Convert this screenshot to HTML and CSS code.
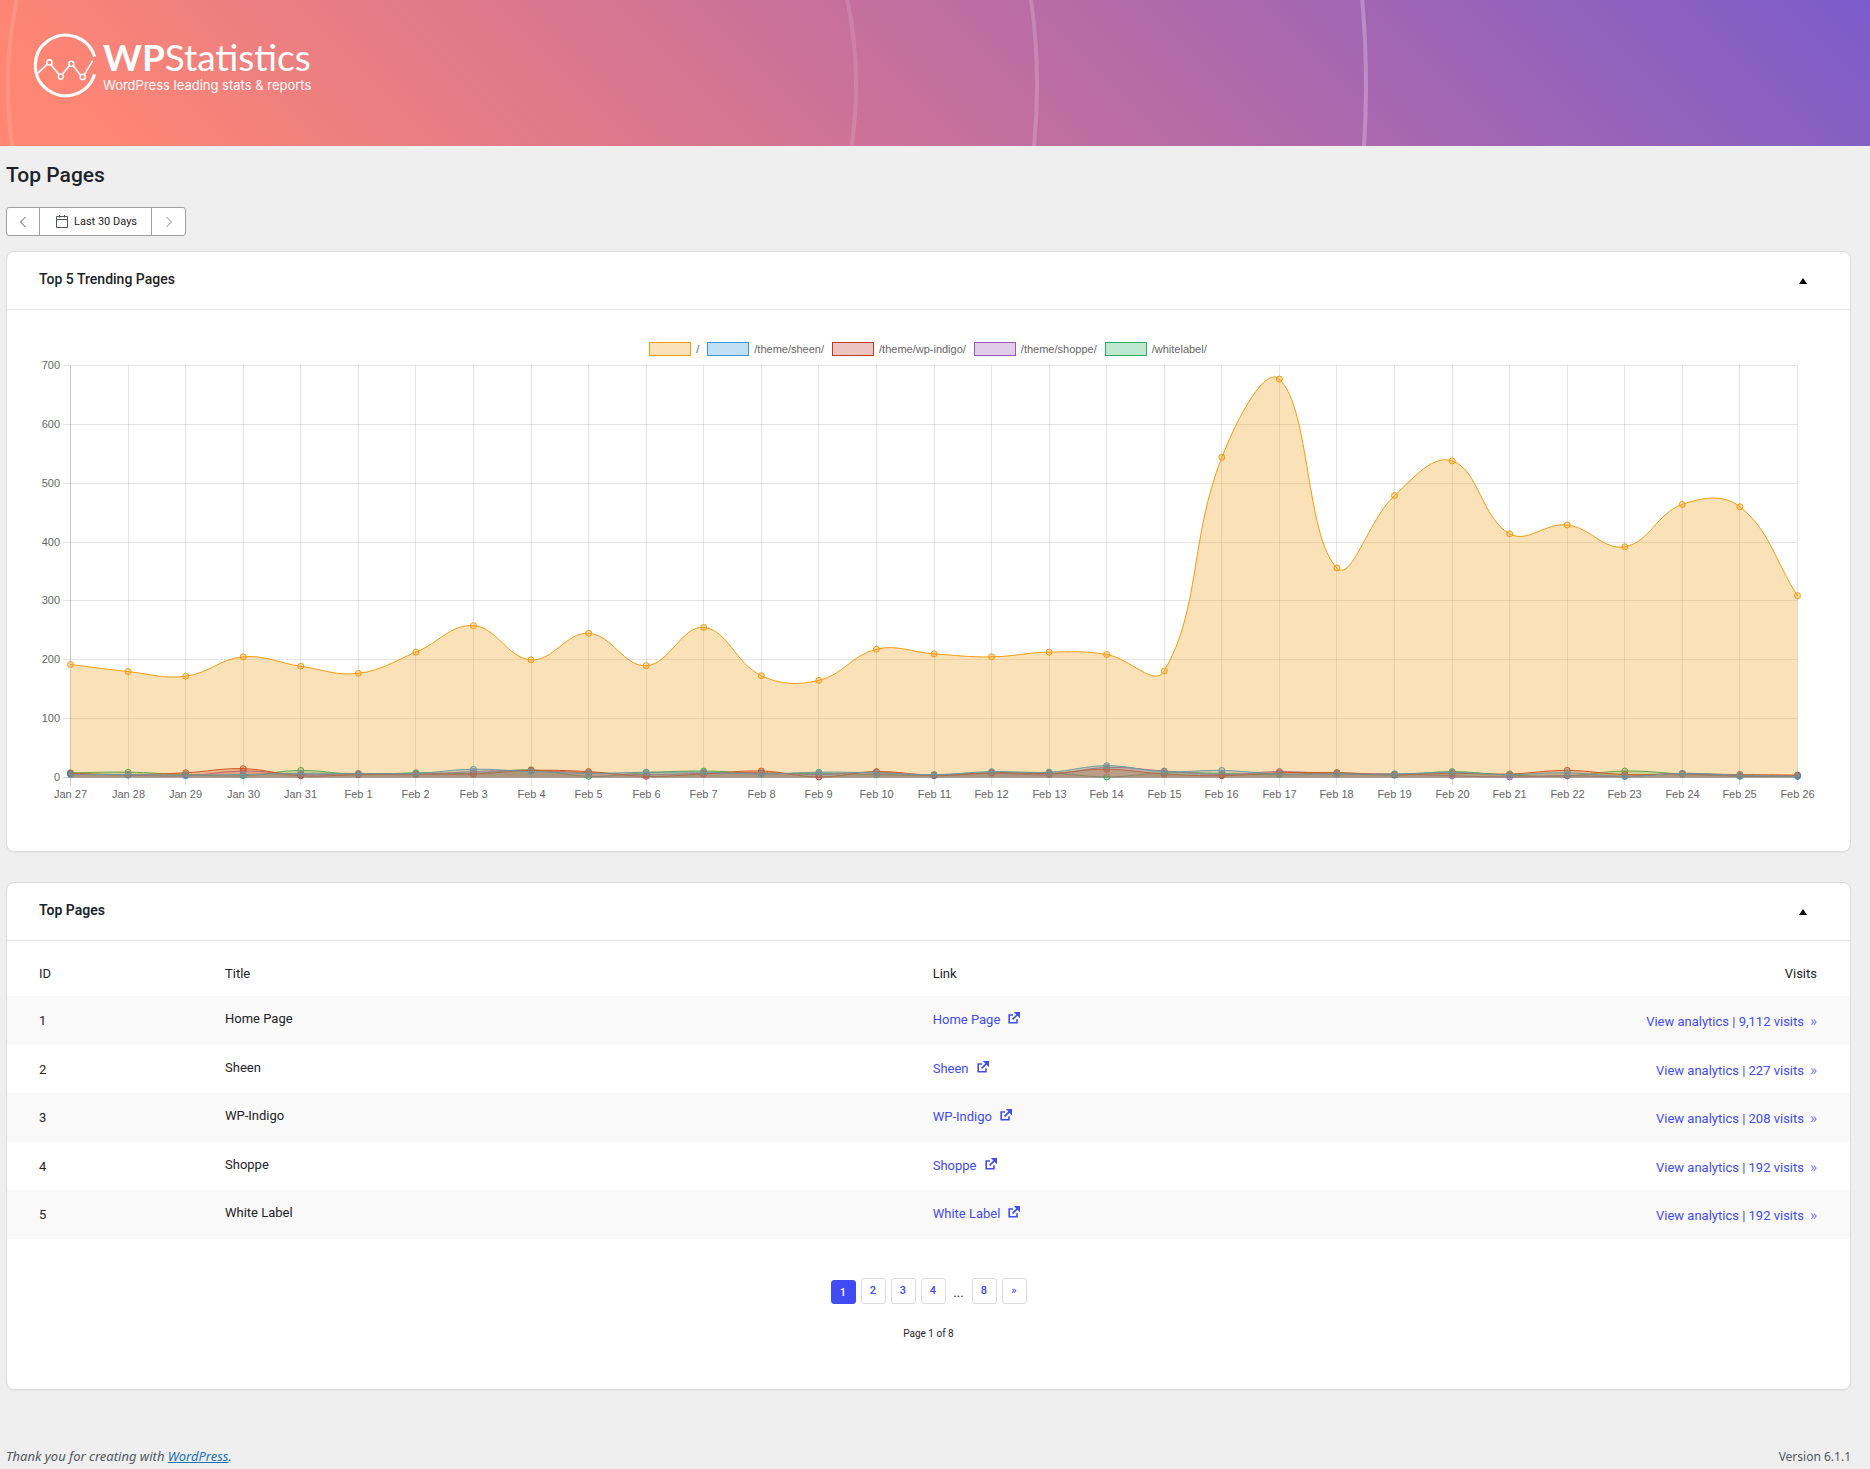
FILE: index.html
```html
<!DOCTYPE html>
<html lang="en">
<head>
<meta charset="utf-8">
<title>Top Pages - WP Statistics</title>
<meta name="viewport" content="width=device-width, initial-scale=1">
<link rel="stylesheet" href="styles.css">
</head>
<body>
<header class="banner">
  <svg class="banner-rings" aria-hidden="true">
    <circle class="ring ring-inner" cx="432" cy="85" r="424"/>
    <circle class="ring ring-middle" cx="432" cy="85" r="605"/>
    <circle class="ring ring-outer" cx="432" cy="85" r="934"/>
  </svg>
  <a class="logo" href="#">
    <svg class="logo-mark" viewBox="0 0 66 66" aria-hidden="true">
      <g fill="none" stroke="#fff">
        <path stroke-width="3" d="M61.6 23.6A30.3 30.3 0 1 0 61.6 41.2"/>
        <path stroke-width="1.6" d="M4.6 40.4L14.9 30.7M18 31.7L26.3 41.8M29.3 41.5L36.5 32.3M40 32.4L47.6 42.3M51 42.2L59.6 27.8"/>
        <circle cx="16.4" cy="29.4" r="2.6" stroke-width="1.5"/>
        <circle cx="27.8" cy="43.5" r="2.6" stroke-width="1.5"/>
        <circle cx="38.3" cy="30.8" r="2.6" stroke-width="1.5"/>
        <circle cx="49.7" cy="43.9" r="2.6" stroke-width="1.5"/>
      </g>
    </svg>
    <span class="logo-words">
      <span class="logo-name"><b>WP</b>Statistics</span>
      <span class="logo-tagline">WordPress leading stats &amp; reports</span>
    </span>
  </a>
</header>

<main class="page">
  <h1 class="page-title">Top Pages</h1>

  <div class="date-range">
    <button type="button" class="date-step" aria-label="Previous period">
      <svg width="8" height="12" viewBox="0 0 8 12" aria-hidden="true"><path d="M6.5 1L1.5 6l5 5"/></svg>
    </button>
    <button type="button" class="date-current">
      <svg width="12" height="13" viewBox="0 0 12 13" aria-hidden="true"><path d="M.5 1.5h11v11H.5zM.5 4.5h11M3.5 0v2.5M8.5 0v2.5"/></svg>
      Last 30 Days
    </button>
    <button type="button" class="date-step date-step-next" aria-label="Next period">
      <svg width="8" height="12" viewBox="0 0 8 12" aria-hidden="true"><path d="M1.5 1l5 5-5 5"/></svg>
    </button>
  </div>

  <section class="card">
    <div class="card-head">
      <h2 class="card-title">Top 5 Trending Pages</h2>
      <button type="button" class="card-toggle" aria-label="Toggle panel: Top 5 Trending Pages">
        <svg width="8" height="6" viewBox="0 0 8 6" aria-hidden="true"><path d="M4 0l4 6H0z"/></svg>
      </button>
    </div>
    <div class="chart">
      <ul class="legend">
        <li class="legend-item"><span class="swatch swatch-home"></span>/</li>
        <li class="legend-item"><span class="swatch swatch-sheen"></span>/theme/sheen/</li>
        <li class="legend-item"><span class="swatch swatch-indigo"></span>/theme/wp-indigo/</li>
        <li class="legend-item"><span class="swatch swatch-shoppe"></span>/theme/shoppe/</li>
        <li class="legend-item"><span class="swatch swatch-label"></span>/whitelabel/</li>
      </ul>
      <svg class="plot" id="plot" role="img" aria-label="Visits per day for the top five pages"></svg>
    </div>
  </section>

  <section class="card">
    <div class="card-head">
      <h2 class="card-title card-title-bold">Top Pages</h2>
      <button type="button" class="card-toggle" aria-label="Toggle panel: Top Pages">
        <svg width="8" height="6" viewBox="0 0 8 6" aria-hidden="true"><path d="M4 0l4 6H0z"/></svg>
      </button>
    </div>
    <svg class="symbols" aria-hidden="true">
      <symbol id="external" viewBox="0 0 12 12">
        <path fill="none" stroke="currentColor" stroke-width="1.6" d="M5 3H1.2v7.8H9V7.2M4.6 7.4L9.4 2.6"/>
        <path fill="currentColor" d="M5.8 0H12v6.2l-2-2L7.8 2z"/>
      </symbol>
    </svg>
    <table class="pages">
      <thead>
        <tr><th class="col-id">ID</th><th class="col-title">Title</th><th class="col-link">Link</th><th class="col-visits">Visits</th></tr>
      </thead>
      <tbody>
        <tr>
          <td class="col-id">1</td><td class="col-title">Home Page</td>
          <td class="col-link"><a class="page-link" href="#">Home Page <svg width="12" height="12"><use href="#external"/></svg></a></td>
          <td class="col-visits"><a href="#">View analytics | 9,112 visits<span class="more">»</span></a></td>
        </tr>
        <tr>
          <td class="col-id">2</td><td class="col-title">Sheen</td>
          <td class="col-link"><a class="page-link" href="#">Sheen <svg width="12" height="12"><use href="#external"/></svg></a></td>
          <td class="col-visits"><a href="#">View analytics | 227 visits<span class="more">»</span></a></td>
        </tr>
        <tr>
          <td class="col-id">3</td><td class="col-title">WP-Indigo</td>
          <td class="col-link"><a class="page-link" href="#">WP-Indigo <svg width="12" height="12"><use href="#external"/></svg></a></td>
          <td class="col-visits"><a href="#">View analytics | 208 visits<span class="more">»</span></a></td>
        </tr>
        <tr>
          <td class="col-id">4</td><td class="col-title">Shoppe</td>
          <td class="col-link"><a class="page-link" href="#">Shoppe <svg width="12" height="12"><use href="#external"/></svg></a></td>
          <td class="col-visits"><a href="#">View analytics | 192 visits<span class="more">»</span></a></td>
        </tr>
        <tr>
          <td class="col-id">5</td><td class="col-title">White Label</td>
          <td class="col-link"><a class="page-link" href="#">White Label <svg width="12" height="12"><use href="#external"/></svg></a></td>
          <td class="col-visits"><a href="#">View analytics | 192 visits<span class="more">»</span></a></td>
        </tr>
      </tbody>
    </table>
    <nav class="pagination" aria-label="Pagination">
      <span class="page-number page-number-current" aria-current="page">1</span>
      <a class="page-number" href="#">2</a>
      <a class="page-number" href="#">3</a>
      <a class="page-number" href="#">4</a>
      <span class="page-dots">...</span>
      <a class="page-number" href="#">8</a>
      <a class="page-number" href="#" aria-label="Next page">»</a>
    </nav>
    <p class="page-count">Page 1 of 8</p>
  </section>
</main>

<footer class="footer">
  <p class="thanks">Thank you for creating with <a href="#">WordPress</a>.</p>
  <p class="version">Version 6.1.1</p>
</footer>
<script src="chart.js"></script>
</body>
</html>
```
FILE: styles.css
```css
* { box-sizing: border-box; }

body {
  margin: 0;
  background: #efefef;
  color: #1d2327;
  font-family: Roboto, "Liberation Sans", sans-serif;
  font-size: 13px;
  line-height: 16px;
}

h1, h2, p, ul { margin: 0; padding: 0; }

button {
  padding: 0;
  border: 0;
  background: none;
  color: inherit;
  font: inherit;
  cursor: pointer;
}

a { color: #404bf2; text-decoration: none; }

/* Banner */
.banner {
  position: relative;
  height: 146px;
  padding: 33px 33px 0;
  overflow: hidden;
  background: linear-gradient(45deg, #ff8673 5%, #cc7298 44%, #a567b1 72%, #7b5cca 100%);
}
.banner-rings { position: absolute; inset: 0; width: 100%; height: 100%; }
.ring { fill: none; stroke: #fff; stroke-width: 4; }
.ring-inner { stroke-opacity: 0.12; }
.ring-middle { stroke-opacity: 0.18; }
.ring-outer { stroke-opacity: 0.25; }

.logo { position: relative; display: inline-flex; gap: 4px; color: #fff; }
.logo-mark { width: 66px; height: 66px; }
.logo-words { display: flex; flex-direction: column; padding-top: 4px; }
.logo-name {
  font-family: Lato, "Liberation Sans", sans-serif;
  font-size: 37px;
  line-height: 40px;
}
.logo-name b { font-weight: 700; }
.logo-tagline { font-family: Inter, "Liberation Sans", sans-serif; font-size: 13px; line-height: 16px; }

/* Page frame */
.page { padding: 17px 19px 0 6px; }
.page-title { font-size: 21px; line-height: 24px; font-weight: 500; }

.date-range {
  display: inline-flex;
  height: 29px;
  margin: 20px 0 15px;
  border: 1px solid #a0a0a0;
  border-radius: 3px;
  background: #fff;
  vertical-align: top;
}
.date-step, .date-current { display: flex; align-items: center; justify-content: center; }
.date-range svg { fill: none; stroke: #50575e; }
.date-step { width: 32px; }
.date-step-next { width: 33px; }
.date-step-next svg { stroke: #888; }
.date-current {
  gap: 6px;
  padding: 0 14px 0 16px;
  border: solid #a0a0a0;
  border-width: 0 1px;
  font-size: 11px;
}

/* Cards */
.card {
  border: 1px solid #dcdcde;
  border-radius: 8px;
  background: #fff;
  box-shadow: 0 1px 1px rgba(0, 0, 0, 0.04);
}
.card + .card { margin-top: 30px; }
.card-head {
  display: flex;
  align-items: center;
  justify-content: space-between;
  height: 58px;
  padding: 0 43px 0 32px;
  border-bottom: 1px solid #e5e5e5;
}
.card-title { padding-bottom: 3px; font-size: 14px; line-height: 20px; font-weight: 500; }
.card-title-bold { font-weight: 600; }
.card-toggle { display: flex; }

/* Chart */
.chart { padding: 32px 33px 45px 32px; }
.legend {
  display: flex;
  justify-content: center;
  gap: 8px;
  list-style: none;
  color: #666;
  font-family: "Liberation Sans", Arial, sans-serif;
  font-size: 11px;
  line-height: 14px;
}
.legend-item { display: flex; align-items: center; gap: 5px; }
.swatch { width: 42px; height: 14px; border: 1px solid; }
.swatch-home { border-color: #f39c12; background: #fae1b8; }
.swatch-sheen { border-color: #3498db; background: #c2e0f4; }
.swatch-indigo { border-color: #c0392b; background: #ecc4bf; }
.swatch-shoppe { border-color: #9b59b6; background: #e1cde9; }
.swatch-label { border-color: #27ae60; background: #bee7cf; }

.plot { display: block; width: 100%; height: 450px; overflow: visible; }
.plot text { fill: #666; font-family: "Liberation Sans", Arial, sans-serif; font-size: 11px; }
.plot .x-label { text-anchor: middle; }
.plot .y-label { text-anchor: end; }
.plot .grid { stroke: rgba(0, 0, 0, 0.1); }
.plot .grid-zero { stroke: rgba(0, 0, 0, 0.2); }

/* Table */
.symbols { display: none; }
.pages { width: 100%; border-collapse: collapse; table-layout: fixed; }
.pages th { padding: 25px 0 14px; font-weight: 400; text-align: left; }
.pages td { height: 49px; padding: 17px 0 0; vertical-align: top; }
.pages td.col-title { padding-top: 15px; }
.pages td.col-link { padding-top: 16px; }
.pages tbody tr:nth-child(odd) { background: #f9f9f9; }
.pages tbody tr:nth-child(even) td { height: 48px; }
.pages .col-id { width: 218px; padding-left: 32px; }
.pages .col-title { width: 38.4%; }
.pages .col-visits { padding-right: 33px; text-align: right; }
.page-link { display: inline-flex; gap: 8px; }
.more { margin-left: 6px; font-size: 15px; opacity: 0.7; }

/* Pagination */
.pagination {
  display: flex;
  align-items: flex-end;
  justify-content: center;
  gap: 5px;
  margin-top: 39px;
  font-size: 11px;
  font-weight: 500;
}
.page-number {
  display: flex;
  justify-content: center;
  width: 25px;
  height: 26px;
  padding-top: 4px;
  border: 1px solid #dcdcde;
  border-radius: 3px;
}
.page-number-current {
  height: 24px;
  border-color: #404bf2;
  background: #404bf2;
  color: #fff;
}
.page-dots { width: 16px; padding-bottom: 3px; font-size: 13px; font-weight: 400; text-align: center; }
.page-count { padding: 24px 0 49px; font-size: 10px; line-height: 12px; text-align: center; }

/* Footer */
.footer {
  display: flex;
  align-items: baseline;
  justify-content: space-between;
  padding: 57px 19px 4px 6px;
  color: #50575e;
  font-family: "Noto Sans", sans-serif;
  line-height: 18px;
}
.thanks { font-style: italic; }
.thanks a { color: #2271b1; text-decoration: underline; }
.version { font-size: 12px; }
```
FILE: chart.js
```js
(function () {
  var svg = document.getElementById('plot');
  var NS = 'http://www.w3.org/2000/svg';
  var MAX = 700;
  var TENSION = 0.4;
  var area = { left: 31.5, top: 9.5, bottom: 421.5, insetRight: 19.5 };

  var labels = [];
  var d;
  for (d = 27; d <= 31; d++) labels.push('Jan ' + d);
  for (d = 1; d <= 26; d++) labels.push('Feb ' + d);

  var series = [
    { rgb: '243,156,18', data: [192, 180, 172, 205, 189, 177, 213, 258, 200, 245, 190, 255, 173, 165, 218, 210, 205, 213, 209, 181, 544, 677, 356, 479, 538, 414, 429, 392, 464, 460, 309] },
    { rgb: '52,152,219', data: [5, 5, 4, 5, 7, 7, 7, 14, 10, 7, 9, 9, 6, 9, 8, 5, 10, 9, 20, 10, 12, 6, 6, 6, 9, 5, 8, 2, 7, 4, 2] },
    { rgb: '192,57,43', data: [7, 5, 8, 15, 3, 5, 6, 6, 12, 10, 2, 6, 11, 1, 10, 4, 8, 7, 14, 6, 3, 8, 8, 5, 7, 6, 12, 5, 6, 5, 4] },
    { rgb: '155,89,182', data: [6, 4, 3, 11, 5, 6, 5, 10, 12, 8, 5, 7, 8, 5, 9, 3, 7, 5, 17, 11, 5, 10, 6, 6, 3, 1, 3, 2, 7, 3, 3] },
    { rgb: '39,174,96', data: [8, 9, 5, 3, 12, 5, 8, 7, 13, 2, 8, 11, 7, 7, 5, 4, 8, 8, 1, 8, 7, 5, 8, 4, 10, 4, 3, 11, 6, 2, 2] }
  ];

  function add(name, attrs, text) {
    var node = document.createElementNS(NS, name);
    Object.keys(attrs).forEach(function (key) { node.setAttribute(key, attrs[key]); });
    if (text !== undefined) node.textContent = text;
    svg.appendChild(node);
  }

  function clamp(y) { return Math.max(area.top, Math.min(area.bottom, y)); }

  // Control points before and after each point of a tensioned spline.
  function controls(points) {
    return points.map(function (p, i) {
      var prev = points[i - 1] || p;
      var next = points[i + 1] || p;
      var a = Math.hypot(p.x - prev.x, p.y - prev.y);
      var b = Math.hypot(next.x - p.x, next.y - p.y);
      var fa = TENSION * a / (a + b);
      var fb = TENSION * b / (a + b);
      return {
        before: { x: p.x - fa * (next.x - prev.x), y: clamp(p.y - fa * (next.y - prev.y)) },
        after: { x: p.x + fb * (next.x - prev.x), y: clamp(p.y + fb * (next.y - prev.y)) }
      };
    });
  }

  function draw() {
    var right = svg.clientWidth - area.insetRight;
    var step = (right - area.left) / (labels.length - 1);
    svg.textContent = '';

    for (var v = 0; v <= MAX; v += 100) {
      var gy = Math.floor(area.bottom - (area.bottom - area.top) * v / MAX) + 0.5;
      add('line', { 'class': v ? 'grid' : 'grid-zero', x1: area.left - 8, x2: right, y1: gy, y2: gy });
      add('text', { 'class': 'y-label', x: 21, y: gy + 3 }, v);
    }
    labels.forEach(function (label, i) {
      var gx = Math.floor(area.left + step * i) + 0.5;
      add('line', { 'class': i ? 'grid' : 'grid-zero', x1: gx, x2: gx, y1: area.top, y2: area.bottom + 8 });
      add('text', { 'class': 'x-label', x: gx, y: 442 }, label);
    });

    series.slice().reverse().forEach(function (set) {
      var points = set.data.map(function (value, i) {
        return { x: area.left + step * i, y: area.bottom - (area.bottom - area.top) * value / MAX };
      });
      var c = controls(points);
      var line = 'M' + points[0].x + ' ' + points[0].y;
      for (var i = 1; i < points.length; i++) {
        line += 'C' + [c[i - 1].after.x, c[i - 1].after.y, c[i].before.x, c[i].before.y, points[i].x, points[i].y].join(' ');
      }
      var fill = 'rgba(' + set.rgb + ',0.3)';
      var stroke = 'rgb(' + set.rgb + ')';
      add('path', { d: line + 'V' + area.bottom + 'H' + area.left + 'Z', fill: fill });
      add('path', { d: line, fill: 'none', stroke: stroke });
      points.forEach(function (p) { add('circle', { cx: p.x, cy: p.y, r: 3, fill: fill, stroke: stroke }); });
    });
  }

  draw();
  window.addEventListener('resize', draw);
})();
```
